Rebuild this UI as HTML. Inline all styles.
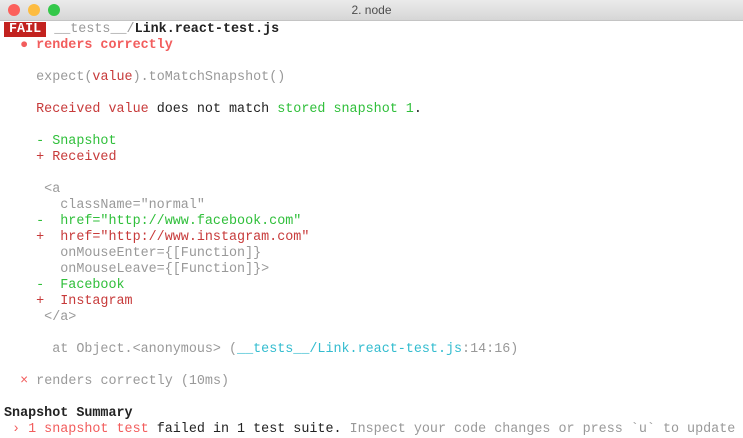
<html><head><style>
body{margin:0;width:743px;height:436px;background:#fff;overflow:hidden;font-family:"Liberation Mono",monospace;font-size:13.4px;}
.tb{height:21px;background:linear-gradient(#ebebeb,#d6d6d6);border-bottom:1px solid #c4c4c4;position:relative;font-family:"Liberation Sans",sans-serif;font-size:12px;color:#4d4d4d;text-align:center;line-height:20px;box-sizing:border-box}
.d{position:absolute;top:4px;width:12px;height:12px;border-radius:50%}
pre{margin:0;position:absolute;top:22px;left:4px;line-height:16px;font-family:inherit;color:#222}
.g{color:#999}.r{color:#f25d5d}.dr{color:#c73a3a}.gr{color:#2fbf3a}.c{color:#33bccf}.b{font-weight:bold}
.fail{background:#c2221f;color:#fff;font-weight:bold;padding:0 5px}
</style></head><body>
<div class="tb"><span class="d" style="left:8px;background:#fc605b"></span><span class="d" style="left:28px;background:#fdbc40"></span><span class="d" style="left:48px;background:#34c84a"></span>2. node</div>
<pre><span class="fail">FAIL</span> <span class="g">__tests__/</span><span class="b">Link.react-test.js</span>
<span class="r b">  ● renders correctly</span>

<span class="g">    expect(</span><span class="dr">value</span><span class="g">).toMatchSnapshot()</span>

<span class="dr">    Received value</span> does not match <span class="gr">stored snapshot 1</span>.

<span class="gr">    - Snapshot</span>
<span class="dr">    + Received</span>

<span class="g">     &lt;a
       className="normal"</span>
<span class="gr">    -  href="http://www.facebook.com"</span>
<span class="dr">    +  href="http://www.instagram.com"</span>
<span class="g">       onMouseEnter={[Function]}
       onMouseLeave={[Function]}&gt;</span>
<span class="gr">    -  Facebook</span>
<span class="dr">    +  Instagram</span>
<span class="g">     &lt;/a&gt;</span>

<span class="g">      at Object.&lt;anonymous&gt; (</span><span class="c">__tests__/Link.react-test.js</span><span class="g">:14:16)</span>

  <span class="r">×</span> <span class="g">renders correctly (10ms)</span>

<span class="b">Snapshot Summary</span>
<span class="r"> › 1 snapshot test</span> failed in 1 test suite. <span class="g">Inspect your code changes or press `u` to update</span>
</pre>
</body></html>
